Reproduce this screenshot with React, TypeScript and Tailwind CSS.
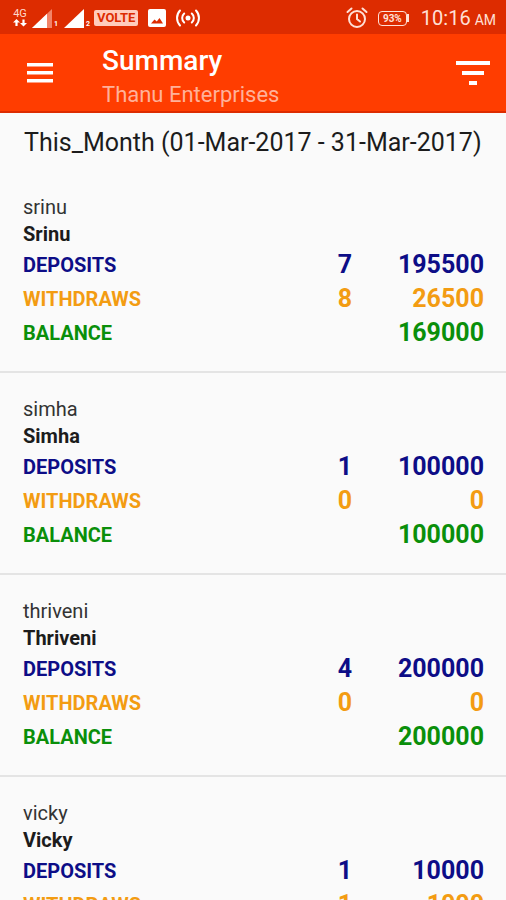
type Account = {
  id: string;
  name: string;
  deposits: { count: number; total: number };
  withdraws: { count: number; total: number };
};

const accounts: Account[] = [
  {
    id: "srinu",
    name: "Srinu",
    deposits: { count: 7, total: 195500 },
    withdraws: { count: 8, total: 26500 },
  },
  {
    id: "simha",
    name: "Simha",
    deposits: { count: 1, total: 100000 },
    withdraws: { count: 0, total: 0 },
  },
  {
    id: "thriveni",
    name: "Thriveni",
    deposits: { count: 4, total: 200000 },
    withdraws: { count: 0, total: 0 },
  },
  {
    id: "vicky",
    name: "Vicky",
    deposits: { count: 1, total: 10000 },
    withdraws: { count: 1, total: 1000 },
  },
];

function NetworkIcon() {
  return (
    <div className="flex w-4 flex-col items-center text-[#ffd9cc]">
      <span className="text-[11px] leading-[10px]">4G</span>
      <svg viewBox="0 0 14 8" className="h-2 w-3.5" fill="#fff" aria-hidden="true">
        <path d="M3.5 0 7 3.5H4.6V7H2.4V3.5H0zM10.5 7.5 7 4h2.4V.5h2.2V4H14z" />
      </svg>
    </div>
  );
}

function SignalIcon({ sim, weak }: { sim: number; weak?: boolean }) {
  return (
    <div className="flex items-end">
      <svg viewBox="0 0 20 19" className="h-[19px] w-5" aria-hidden="true">
        {weak ? (
          <>
            <path d="M20 0v19H0z" fill="#f28468" />
            <path d="M15 4.75V19H0z" fill="#fff" />
          </>
        ) : (
          <path d="M20 0v19H0z" fill="#fff" />
        )}
      </svg>
      <span className="w-1.5 pl-0.5 text-[7px] leading-[7px] font-bold text-white">{sim}</span>
    </div>
  );
}

function StatusBar() {
  return (
    <div className="flex h-[34px] items-center justify-between bg-[#dd2c00] pt-0.5 pr-2.5 pl-3">
      <div className="flex items-center">
        <NetworkIcon />
        <div className="ml-1 flex gap-1.5">
          <SignalIcon sim={1} weak />
          <SignalIcon sim={2} />
        </div>
        <span className="ml-1 rounded-xs bg-[#ffccbc] px-[3px] text-[13px] leading-4 font-bold text-[#dd2c00]">
          VOLTE
        </span>
        <svg viewBox="0 0 18 18" className="ml-2.5 h-[18px] w-[18px]" aria-hidden="true">
          <rect width="18" height="18" rx="2" fill="#fff" />
          <path d="M3 14.500 6.500 10.500l2.300 2L11.500 9l3.500 5.500z" fill="#dd2c00" />
        </svg>
        <svg
          viewBox="0 0 24 18"
          className="ml-2.5 h-[18px] w-6"
          fill="none"
          stroke="#fff"
          strokeWidth="2"
          strokeLinecap="round"
          aria-hidden="true"
        >
          <circle cx="12" cy="9" r="2.500" fill="#fff" stroke="none" />
          <path d="M8.200 4.500a6 6 0 0 0 0 9M15.800 4.500a6 6 0 0 1 0 9M4 1.500a11 11 0 0 0 0 15M20 1.500a11 11 0 0 1 0 15" />
        </svg>
      </div>
      <div className="flex items-center text-[#ffe0d6]">
        <svg
          viewBox="0 0 22 22"
          className="h-[22px] w-[22px]"
          fill="none"
          stroke="currentColor"
          strokeWidth="2"
          strokeLinecap="round"
          aria-hidden="true"
        >
          <circle cx="11" cy="12" r="8" />
          <path d="M11 7.500V12l3 2.500M1.500 5 5.500 1.500M20.500 5l-4-3.500" />
        </svg>
        <div className="ml-2.5 flex items-center">
          <span className="w-[29px] rounded-sm border border-current text-center text-[10px] leading-[13px] font-bold">
            93%
          </span>
          <span className="h-2 w-0.5 bg-current" />
        </div>
        <span className="ml-3 text-[20px] leading-6">10:16</span>
        <span className="ml-1 pt-1 text-[14px] leading-5">AM</span>
      </div>
    </div>
  );
}

function AppBar() {
  return (
    <header className="flex h-[79px] items-center border-b-2 border-[#dd2c00] bg-[#ff3d00] pr-4 pl-[26px]">
      <button type="button" aria-label="Open menu" className="text-white">
        <svg viewBox="0 0 28 20" className="h-5 w-7" fill="currentColor" aria-hidden="true">
          <path d="M1 0h26v3.500H1zM1 8h26v3.500H1zM1 16h26v3.500H1z" />
        </svg>
      </button>
      <div className="ml-12 flex-1 pt-2">
        <h1 className="text-[28px] leading-9 font-medium text-white">Summary</h1>
        <p className="text-[22px] leading-8 text-[#ffb199]">Thanu Enterprises</p>
      </div>
      <button type="button" aria-label="Filter" className="text-white">
        <svg viewBox="0 0 34 24" className="h-6 w-[34px]" fill="currentColor" aria-hidden="true">
          <path d="M0 0h34v4H0zM6 10h22v4H6zM13 20h8v4h-8z" />
        </svg>
      </button>
    </header>
  );
}

function AccountCard({ account }: { account: Account }) {
  const { deposits, withdraws } = account;
  return (
    <li className="border-b-2 border-[#e4e4e4] pt-[23px] pr-[22px] pb-[21px] pl-[23px]">
      <p className="text-[20px] leading-[27px] text-[#333]">{account.id}</p>
      <h2 className="text-[20px] leading-[27px] font-bold text-[#1c1c1c]">{account.name}</h2>
      <table aria-label={account.name} className="w-full table-fixed font-bold">
        <tbody className="text-right text-[25px] leading-[34px]">
          <tr className="text-[#0d0d87]">
            <th scope="row" className="text-left text-[20px] leading-[34px]">DEPOSITS</th>
            <td className="w-16">{deposits.count}</td>
            <td className="w-[132px]">{deposits.total}</td>
          </tr>
          <tr className="text-[#f39c12]">
            <th scope="row" className="text-left text-[20px] leading-[34px]">WITHDRAWS</th>
            <td>{withdraws.count}</td>
            <td>{withdraws.total}</td>
          </tr>
          <tr className="text-[#0a8f0a]">
            <th scope="row" className="text-left text-[20px] leading-[34px]">BALANCE</th>
            <td />
            <td>{deposits.total - withdraws.total}</td>
          </tr>
        </tbody>
      </table>
    </li>
  );
}

export default function App() {
  return (
    <div className="flex h-screen flex-col bg-[#fafafa] font-[Roboto,sans-serif]">
      <StatusBar />
      <AppBar />
      <main className="min-h-0 flex-1 overflow-y-auto [scrollbar-width:none]">
        <p className="px-6 pt-3 pb-2.5 text-[25px] leading-9 whitespace-nowrap text-[#1c1c1c]">
          This_Month (01-Mar-2017 - 31-Mar-2017)
        </p>
        <ul>
          {accounts.map((account) => (
            <AccountCard key={account.id} account={account} />
          ))}
        </ul>
      </main>
    </div>
  );
}
